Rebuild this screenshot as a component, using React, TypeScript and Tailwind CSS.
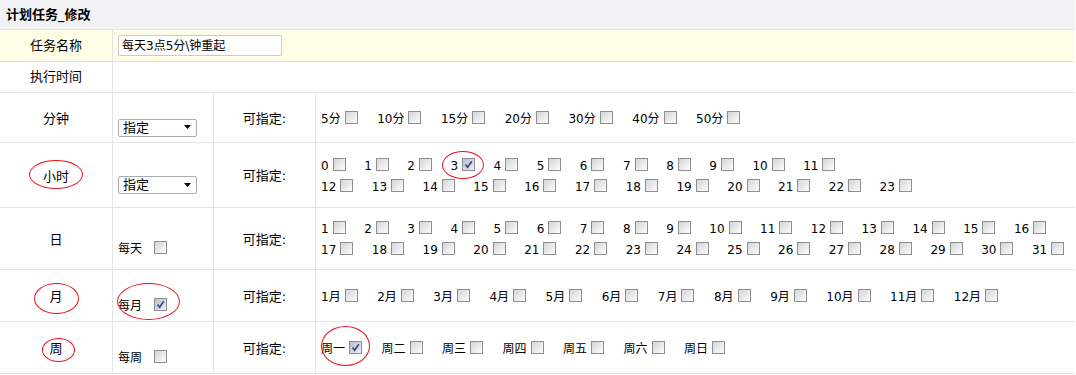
import React from 'react';

const FONT = "font-['DejaVu_Sans','Noto_Sans_CJK_SC',sans-serif]";

const Box: React.FC<{ checked?: boolean; gap?: string }> = ({ checked, gap = 'mr-[18.5px]' }) => (
  <span
    className={
      'inline-flex w-[13px] h-[13px] shrink-0 border border-[#8e8f8f] ml-[4px] mb-[3px] ' +
      gap +
      ' ' +
      (checked ? 'bg-linear-to-br from-[#b7bdcf] to-[#eef0f6]' : 'bg-linear-to-br from-[#d4d5d8] to-[#fdfdfd]')
    }
  >
    {checked && (
      <svg width="11" height="11" viewBox="0 0 11 11">
        <path d="M2.5 5.5 L4.6 8.2 L8.8 2.2" fill="none" stroke="#3b4c8c" strokeWidth="1.7" />
      </svg>
    )}
  </span>
);

const Item: React.FC<{ label: string; checked?: boolean }> = ({ label, checked }) => (
  <span className="inline-flex items-center shrink-0">
    <span>{label}</span>
    <Box checked={checked} gap={/^\d+$/.test(label) ? 'mr-[18.5px]' : 'mr-[19.5px]'} />
  </span>
);

const Line: React.FC<{ items: string[]; checked?: string }> = ({ items, checked }) => (
  <div className="flex items-center h-[21px] whitespace-nowrap">
    {items.map((it) => (
      <Item key={it} label={it} checked={it === checked} />
    ))}
  </div>
);

const Select: React.FC = () => (
  <div className="flex items-center justify-between w-[79px] h-[18px] border border-[#a5acb2] rounded-[2px] bg-white pl-[4px] pr-[4px] text-[13px]">
    <span>指定</span>
    <svg width="8" height="5" viewBox="0 0 8 5">
      <path d="M0 0 H7 L3.5 4 Z" fill="#000" />
    </svg>
  </div>
);

const Ellipse: React.FC<{ cls: string }> = ({ cls }) => (
  <div className={'absolute border border-[#e8141b] rounded-[50%] pointer-events-none ' + cls} />
);

type Row = {
  label: string;
  h: string;
  left: React.ReactNode;
  lines: { items: string[]; checked?: string }[];
};

const range = (a: number, b: number, suffix = '') =>
  Array.from({ length: b - a + 1 }, (_, i) => `${a + i}${suffix}`);

const Every: React.FC<{ text: string; checked?: boolean }> = ({ text, checked }) => (
  <span className="flex items-center text-[12px]">
    {text}
    <span className="w-[8px]" />
    <Box checked={checked} />
  </span>
);

const rows: Row[] = [
  { label: '分钟', h: 'h-[50px]', left: <Select />, lines: [{ items: ['5分', '10分', '15分', '20分', '30分', '40分', '50分'] }] },
  {
    label: '小时',
    h: 'h-[65px]',
    left: <Select />,
    lines: [
      { items: range(0, 11), checked: '3' },
      { items: range(12, 23) },
    ],
  },
  { label: '日', h: 'h-[62px]', left: <Every text="每天" />, lines: [{ items: range(1, 16) }, { items: range(17, 31) }] },
  { label: '月', h: 'h-[52px]', left: <Every text="每月" checked />, lines: [{ items: range(1, 12, '月') }] },
  {
    label: '周',
    h: 'h-[52px]',
    left: <Every text="每周" />,
    lines: [{ items: ['周一', '周二', '周三', '周四', '周五', '周六', '周日'], checked: '周一' }],
  },
];

export default function App() {
  return (
    <div className={`relative w-[1076px] h-[375px] bg-white text-black ${FONT}`}>
      <div className="w-[1075px] flex flex-col">
        <div className="h-[30px] bg-[#f1f2f4] border-b border-[#e3e4e8] flex items-center pl-[6px] text-[13px] font-bold">
          计划任务_修改
        </div>

        <div className="h-[32px] bg-[#fffde6] border-b border-[#e3e4e8] flex">
          <div className="w-[113px] shrink-0 border-r border-[#e3e4e8] flex items-center justify-center text-[13px]">任务名称</div>
          <div className="flex items-center pl-[5px]">
            <div className="w-[164px] h-[21px] border border-[#c9cbd0] rounded-[2px] bg-white flex items-center pl-[3px] text-[12px]">
              每天3点5分\钟重起
            </div>
          </div>
        </div>

        <div className="h-[31px] border-b border-[#e3e4e8] flex">
          <div className="w-[113px] shrink-0 border-r border-[#e3e4e8] flex items-center justify-center text-[13px]">执行时间</div>
        </div>

        {rows.map((r) => (
          <div key={r.label} className={`${r.h} border-b border-[#e3e4e8] flex`}>
            <div className="w-[113px] shrink-0 border-r border-[#e3e4e8] flex items-center justify-center pt-[3px] text-[13px]">
              {r.label}
            </div>
            <div className="w-[101px] shrink-0 border-r border-[#e3e4e8] flex items-center pl-[5px] pt-[20px]">{r.left}</div>
            <div className="w-[102px] shrink-0 border-r border-[#e3e4e8] flex items-center justify-center pt-[2px] text-[13px]">
              可指定:
            </div>
            <div className="flex-1 min-w-0 flex flex-col justify-center pl-[5px] pt-[2px] text-[12px]">
              {r.lines.map((l, i) => (
                <Line key={i} items={l.items} checked={l.checked} />
              ))}
            </div>
          </div>
        ))}
      </div>

      <Ellipse cls="left-[29px] top-[160px] w-[54px] h-[29px]" />
      <Ellipse cls="left-[442px] top-[151px] w-[42px] h-[28px]" />
      <Ellipse cls="left-[34px] top-[283px] w-[45px] h-[31px]" />
      <Ellipse cls="left-[117px] top-[283px] w-[63px] h-[37px]" />
      <Ellipse cls="left-[42px] top-[338px] w-[33px] h-[24px]" />
      <Ellipse cls="left-[321px] top-[326px] w-[49px] h-[40px]" />
    </div>
  );
}
